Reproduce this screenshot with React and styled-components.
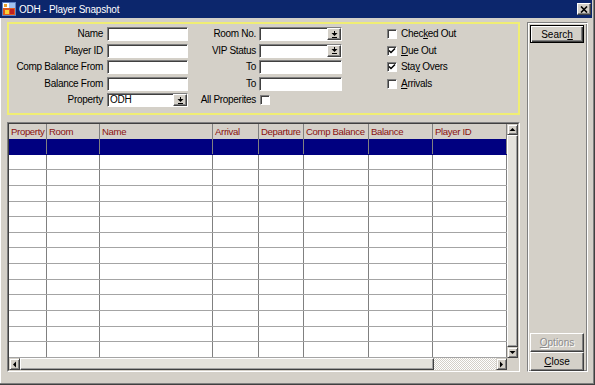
import React from 'react';
import styled, { createGlobalStyle, css } from 'styled-components';

const Global = createGlobalStyle`
  html, body { margin: 0; padding: 0; background: #d4d0c8; }
  body { font-family: "Liberation Sans", Arial, sans-serif; font-size: 10px; }
  *, *::before, *::after { box-sizing: border-box; }
`;

const raised = css`
  background: #d4d0c8;
  border: 1px solid;
  border-color: #ffffff #404040 #404040 #ffffff;
  box-shadow: inset -1px -1px 0 #808080;
`;

const sunken = css`
  background: #ffffff;
  border: 1px solid;
  border-color: #808080 #ffffff #ffffff #808080;
  box-shadow: inset 1px 1px 0 #404040;
`;

const Window = styled.div`
  width: 595px;
  height: 385px;
  background: #d4d0c8;
  border-right: 1px solid #404040;
  border-bottom: 1px solid #404040;
  box-shadow: inset -1px -1px 0 #808080, inset 1px 0 0 #ffffff;
  padding: 0 2px 2px 0;
  display: flex;
  flex-direction: column;
  font-family: "Liberation Sans", Arial, sans-serif;
  font-size: 10px;
  letter-spacing: -0.3px;
  color: #000;
`;

const TitleBar = styled.div`
  height: 18px;
  flex: none;
  background: #0c266c;
  display: flex;
  align-items: center;
  gap: 3px;
  padding: 0 1px 0 2px;
  color: #ffffff;
`;

const TitleText = styled.span`
  flex: 1;
  font-size: 10px;
  letter-spacing: -0.2px;
`;

const CloseBox = styled.div`
  ${raised};
  width: 14px;
  height: 12px;
  display: flex;
  align-items: center;
  justify-content: center;
`;

const Body = styled.div`
  flex: 1;
  display: flex;
  gap: 7px;
  padding: 4px 4px 0 7px;
`;

const LeftCol = styled.div`
  width: 513px;
  display: flex;
  flex-direction: column;
  gap: 7px;
`;

const SearchPanel = styled.div`
  height: 93px;
  border: 2px solid #f0ee74;
  display: grid;
  grid-template-columns: 98px 81px 71px 83px 1fr;
  grid-auto-rows: 14px;
  row-gap: 2.5px;
  padding-top: 3px;
  align-items: center;
`;

const Label = styled.span`
  text-align: right;
  padding-right: ${p => p.$pr}px;
  white-space: nowrap;
  line-height: 14px;
`;

const TextBox = styled.div`
  ${sunken};
  height: 14px;
  width: 100%;
  display: flex;
  align-items: center;
  padding-left: 2px;
  line-height: 12px;
`;

const DropBtn = styled.div`
  ${raised};
  margin-left: auto;
  width: 14px;
  height: 12px;
  display: flex;
  align-items: center;
  justify-content: center;
  flex: none;
`;

const CheckRow = styled.label`
  display: flex;
  align-items: center;
  gap: 4px;
  padding-left: ${p => p.$pl ?? 45}px;
  white-space: nowrap;
  line-height: 14px;
`;

const Box = styled.span`
  ${sunken};
  width: 10px;
  height: 10px;
  flex: none;
  display: flex;
  align-items: center;
  justify-content: center;
`;

const SidePanel = styled.div`
  width: 61px;
  height: 350px;
  border: 1px solid;
  border-color: #808080 #ffffff #ffffff #808080;
  box-shadow: inset 1px 1px 0 #ffffff, inset -1px -1px 0 #808080;
  display: flex;
  flex-direction: column;
  padding: 2px 3px 0 2px;
`;

const Button = styled.div`
  width: 54px;
  height: ${p => (p.$default ? 18 : 19)}px;
  display: flex;
  align-items: center;
  justify-content: center;
  background: #d4d0c8;
  color: ${p => (p.$disabled ? '#8c8c8c' : '#000')};
  text-shadow: ${p => (p.$disabled ? '1px 1px 0 #ffffff' : 'none')};
  border: 1px solid;
  ${p =>
    p.$default
      ? css`
          border-color: #000;
          box-shadow: inset 1px 1px 0 #ffffff, inset -1px -1px 0 #404040, inset -2px -2px 0 #808080;
        `
      : css`
          border-color: #ffffff #404040 #404040 #ffffff;
          box-shadow: inset -1px -1px 0 #808080;
        `}
  font-size: 10px;
  letter-spacing: 0;
`;

const BottomButtons = styled.div`
  margin-top: auto;
  display: flex;
  flex-direction: column;
`;

const TableFrame = styled.div`
  height: 250px;
  border: 1px solid;
  border-color: #808080 #ffffff #ffffff #808080;
`;

const TableInner = styled.div`
  height: 100%;
  border: 1px solid;
  border-color: #404040 #d4d0c8 #d4d0c8 #404040;
  display: grid;
  grid-template-columns: 1fr 11px;
  grid-template-rows: 1fr 12px;
`;

const DataArea = styled.div`
  overflow: hidden;
  background: #ffffff;
  display: flex;
  flex-direction: column;
`;

const COLS = [38, 53, 113, 46, 45, 65, 64, 74];
const gridCols = COLS.map(c => `${c}px`).join(' ');

const HeaderRow = styled.div`
  display: grid;
  grid-template-columns: ${gridCols};
  height: 15px;
  flex: none;
  background: #d4d0c8;
`;

const HeaderCell = styled.div`
  color: #8a1010;
  padding-left: 2px;
  border-right: 1px solid #808080;
  display: flex;
  align-items: center;
  white-space: nowrap;
  overflow: hidden;
  font-size: 9.6px;
  letter-spacing: -0.35px;
`;

const Row = styled.div`
  display: grid;
  grid-template-columns: ${gridCols};
  height: 15.65px;
  flex: none;
  background: ${p => (p.$selected ? '#000080' : '#ffffff')};
  border-bottom: 1px solid ${p => (p.$selected ? '#000080' : '#a4a4a4')};
`;

const Cell = styled.div`
  border-right: 1px solid #808080;
`;

const VScroll = styled.div`
  display: flex;
  flex-direction: column;
  background: #d4d0c8;
`;

const ArrowBtn = styled.div`
  background: #d4d0c8;
  border: 1px solid;
  border-color: #d4d0c8 #404040 #404040 #d4d0c8;
  box-shadow: inset 1px 1px 0 #ffffff, inset -1px -1px 0 #808080;
  width: ${p => p.$w || 11}px;
  height: ${p => p.$h || 11}px;
  flex: none;
  display: flex;
  align-items: center;
  justify-content: center;
`;

const Thumb = styled.div`
  flex: ${p => (p.$w ? 'none' : '1')};
  width: ${p => (p.$w ? `${p.$w}px` : 'auto')};
  background: #e4e2dc;
  border: 1px solid;
  border-color: #ffffff #404040 #404040 #ffffff;
  box-shadow: inset -1px -1px 0 #a0a0a0;
`;

const HScroll = styled.div`
  display: flex;
  background: #d4d0c8;
`;

const Track = styled.div`
  flex: 1;
  background: repeating-conic-gradient(#ffffff 0 25%, #d4d0c8 0 50%) 0 0 / 2px 2px;
`;

const Corner = styled.div`
  background: #d4d0c8;
`;

const Tri = ({ dir }) => {
  const pts = {
    up: '0.5,4 3.5,1 6.5,4',
    down: '0.5,1 3.5,4 6.5,1',
    left: '4,0.5 1,3.5 4,6.5',
    right: '1,0.5 4,3.5 1,6.5',
  }[dir];
  const vertical = dir === 'up' || dir === 'down';
  return (
    <svg width={vertical ? 7 : 5} height={vertical ? 5 : 7} viewBox={vertical ? '0 0 7 5' : '0 0 5 7'}>
      <polygon points={pts} fill="#000" />
    </svg>
  );
};

const DropGlyph = () => (
  <svg width="7" height="7" viewBox="0 0 7 7">
    <rect x="3" y="0" width="1" height="2" fill="#000" />
    <polygon points="0.5,2 6.5,2 3.5,5" fill="#000" />
    <rect x="1" y="6" width="5" height="1" fill="#000" />
  </svg>
);

const CheckMark = () => (
  <svg width="8" height="8" viewBox="0 0 8 8">
    <path d="M1 3.5 L3 5.5 L7 1.5" stroke="#000" strokeWidth="1.5" fill="none" />
  </svg>
);

const AppIcon = () => (
  <svg width="14" height="14" viewBox="0 0 14 14">
    <rect x="0" y="0" width="14" height="14" fill="#5b7fc4" />
    <rect x="1" y="1" width="6" height="5" fill="#ffffff" />
    <rect x="7" y="1" width="6" height="5" fill="#9ec0f0" />
    <rect x="1" y="6" width="12" height="7" fill="#e05a1c" />
    <rect x="3" y="8" width="4" height="4" fill="#f6d23a" />
    <rect x="8" y="7" width="4" height="5" fill="#c02020" />
    <rect x="2" y="2" width="3" height="3" fill="#e8a030" />
  </svg>
);

const Select = ({ value }) => (
  <TextBox>
    {value}
    <DropBtn>
      <DropGlyph />
    </DropBtn>
  </TextBox>
);

const Check = ({ checked, children, pl }) => (
  <CheckRow $pl={pl}>
    <Box>{checked && <CheckMark />}</Box>
    {children !== undefined && <span>{children}</span>}
  </CheckRow>
);

const HEADERS = ['Property', 'Room', 'Name', 'Arrival', 'Departure', 'Comp Balance', 'Balance', 'Player ID'];

export default function App() {
  const rows = Array.from({ length: 14 }, (_, i) => i);
  return (
    <>
      <Global />
      <Window>
        <TitleBar>
          <AppIcon />
          <TitleText>ODH - Player Snapshot</TitleText>
          <CloseBox>
            <svg width="8" height="7" viewBox="0 0 8 7">
              <path d="M1 0.5 L7 6.5 M7 0.5 L1 6.5" stroke="#000" strokeWidth="1.6" />
            </svg>
          </CloseBox>
        </TitleBar>
        <Body>
          <LeftCol>
            <SearchPanel>
              <Label $pr={4}>Name</Label>
              <TextBox />
              <Label $pr={3}>Room No.</Label>
              <Select />
              <Check>Chec<u>k</u>ed Out</Check>

              <Label $pr={4}>Player ID</Label>
              <TextBox />
              <Label $pr={3}>VIP Status</Label>
              <Select />
              <Check checked><u>D</u>ue Out</Check>

              <Label $pr={4}>Comp Balance From</Label>
              <TextBox />
              <Label $pr={3}>To</Label>
              <TextBox />
              <Check checked>Sta<u>y</u> Overs</Check>

              <Label $pr={4}>Balance From</Label>
              <TextBox />
              <Label $pr={3}>To</Label>
              <TextBox />
              <Check><u>A</u>rrivals</Check>

              <Label $pr={4}>Property</Label>
              <Select value="ODH" />
              <Label $pr={3}>All Properites</Label>
              <Check pl={1} />
              <span />
            </SearchPanel>
            <TableFrame>
              <TableInner>
                <DataArea>
                  <HeaderRow>
                    {HEADERS.map(h => (
                      <HeaderCell key={h}>{h}</HeaderCell>
                    ))}
                  </HeaderRow>
                  {rows.map(r => (
                    <Row key={r} $selected={r === 0}>
                      {COLS.map((c, i) => (
                        <Cell key={i} />
                      ))}
                    </Row>
                  ))}
                </DataArea>
                <VScroll>
                  <ArrowBtn>
                    <Tri dir="up" />
                  </ArrowBtn>
                  <Thumb />
                  <ArrowBtn>
                    <Tri dir="down" />
                  </ArrowBtn>
                </VScroll>
                <HScroll>
                  <ArrowBtn $h={12}>
                    <Tri dir="left" />
                  </ArrowBtn>
                  <Thumb $w={414} />
                  <Track />
                  <ArrowBtn $h={12}>
                    <Tri dir="right" />
                  </ArrowBtn>
                </HScroll>
                <Corner />
              </TableInner>
            </TableFrame>
          </LeftCol>
          <SidePanel>
            <Button $default>
              <span>Searc<u>h</u></span>
            </Button>
            <BottomButtons>
              <Button $disabled>
                <span><u>O</u>ptions</span>
              </Button>
              <Button>
                <span><u>C</u>lose</span>
              </Button>
            </BottomButtons>
          </SidePanel>
        </Body>
      </Window>
    </>
  );
}
